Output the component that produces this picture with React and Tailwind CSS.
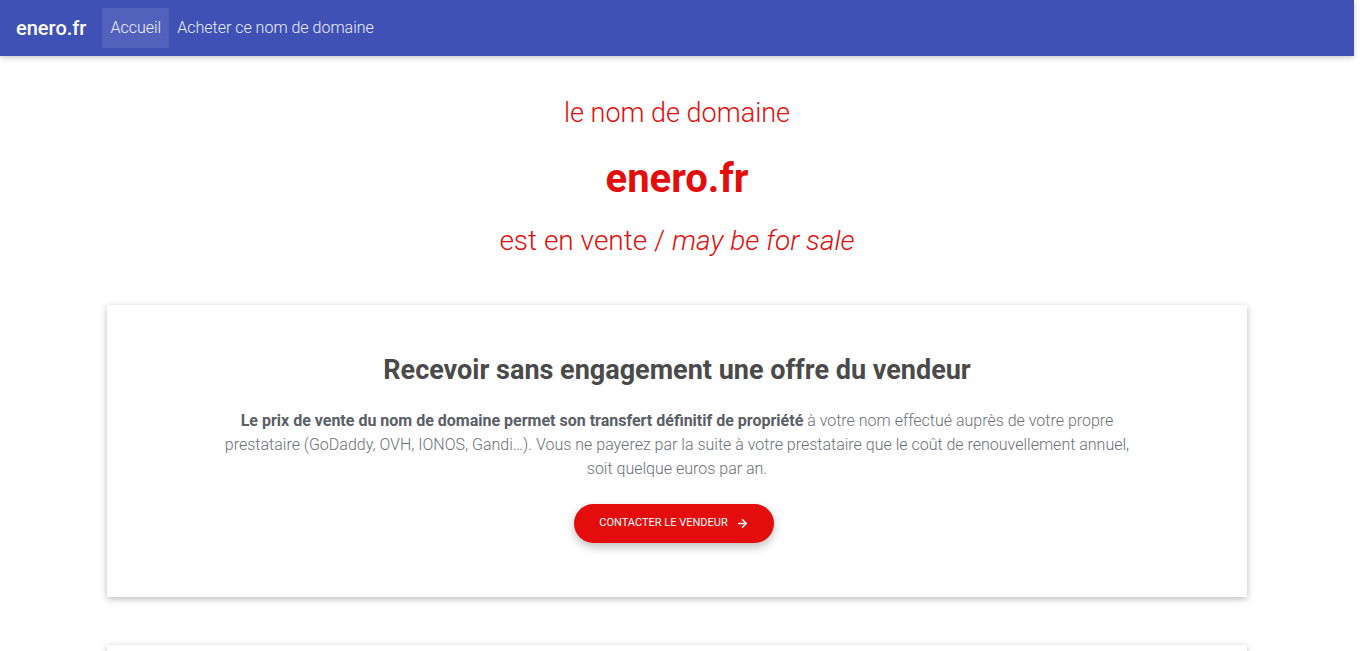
import { ArrowRight } from "lucide-react";

const Navbar = () => (
  <nav className="h-14 bg-[#3f51b5] flex items-center px-4 shadow-[0_2px_5px_rgba(0,0,0,0.2)] relative z-10">
    <a className="text-white text-xl font-medium mr-4">enero.fr</a>
    <a className="h-10 flex items-center px-2 bg-white/10 text-white/90 font-light">Accueil</a>
    <a className="h-10 flex items-center px-2 text-white/90 font-light">Acheter ce nom de domaine</a>
  </nav>
);

const Card = ({ children, className = "" }) => (
  <div className={`bg-white shadow-[0_2px_5px_rgba(0,0,0,0.16),0_2px_10px_rgba(0,0,0,0.12)] ${className}`}>
    {children}
  </div>
);

export default function App() {
  return (
    <div className="h-[651px] overflow-hidden bg-white" style={{ fontFamily: "Roboto, 'Liberation Sans', sans-serif" }}>
      <div className="w-[1354px]">
        <Navbar />

        <header className="text-center text-[#e30d0d] pt-[39px]">
          <p className="text-[27px] font-light leading-9">le nom de domaine</p>
          <h1 className="text-[40px] font-bold leading-[48px] mt-[24px]">enero.fr</h1>
          <p className="text-[28px] font-light leading-9 mt-[20px]">
            est en vente / <em>may be for sale</em>
          </p>
        </header>

        <div className="w-[1140px] mx-auto mt-[46px] flex flex-col gap-12">
          <Card className="h-[292px] pt-[49px] text-center">
            <h2 className="text-[27px] font-bold text-[#4a4a4a] leading-8">
              Recevoir sans engagement une offre du vendeur
            </h2>
            <p className="max-w-[910px] mx-auto mt-[23px] text-base leading-6 font-light text-[#6c6f78]">
              <strong className="font-bold text-[#5b5e66]">
                Le prix de vente du nom de domaine permet son transfert définitif de propriété
              </strong>{" "}
              à votre nom effectué auprès de votre propre prestataire (GoDaddy, OVH, IONOS, Gandi…). Vous ne payerez par la suite à votre prestataire que le coût de renouvellement annuel, soit quelque euros par an.
            </p>
            <button className="mt-[23px] mr-[6px] inline-flex items-center gap-2 h-[39px] w-[200px] justify-center rounded-full bg-[#e30d0d] text-white text-[11px] uppercase shadow-[0_4px_10px_rgba(0,0,0,0.25)]">
              Contacter le vendeur
              <ArrowRight size={13} strokeWidth={3} />
            </button>
          </Card>
          <Card className="h-[200px]" />
        </div>
      </div>
    </div>
  );
}
